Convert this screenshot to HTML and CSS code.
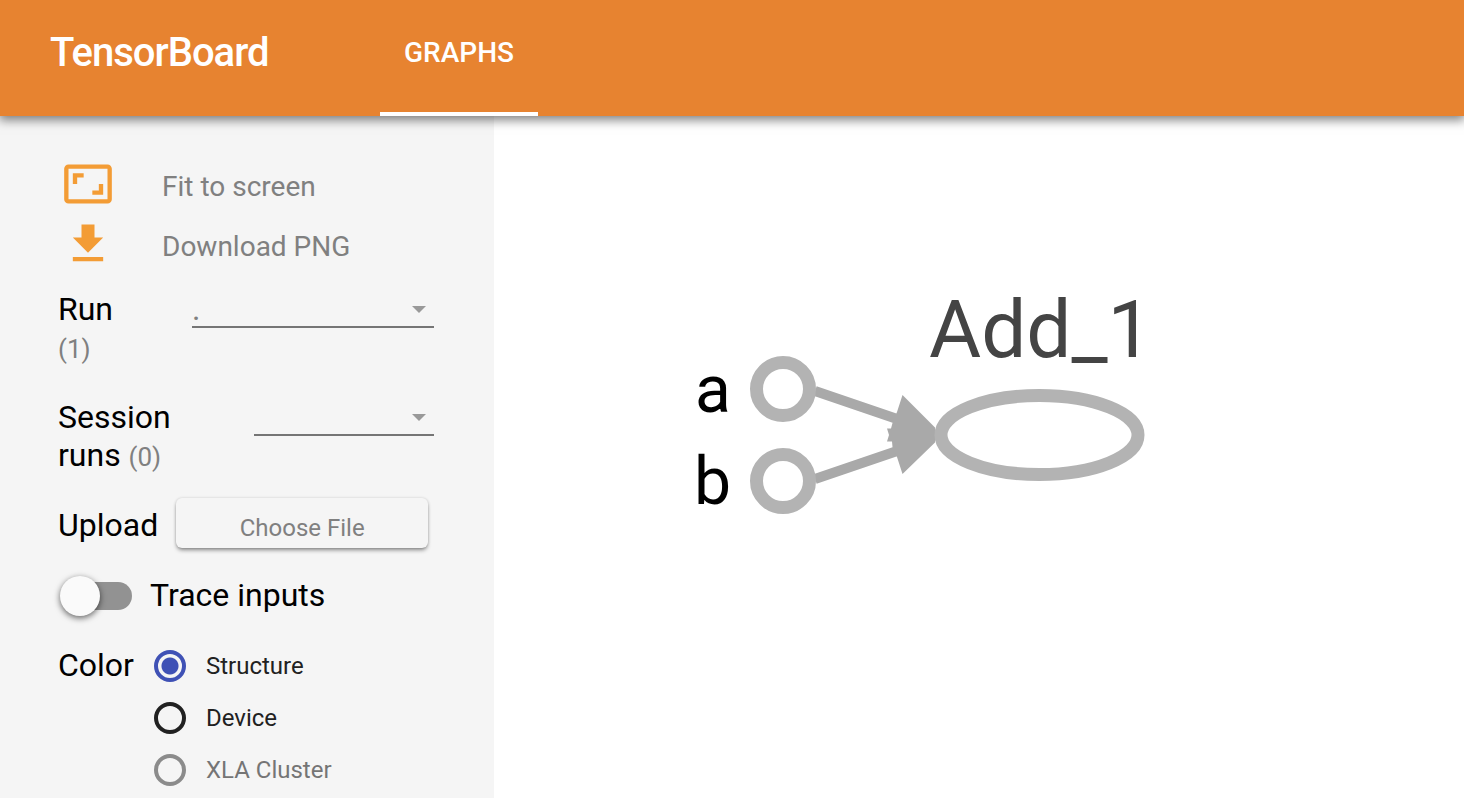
FILE: index.html
```html
<!DOCTYPE html>
<html lang="en">
<head>
<meta charset="utf-8">
<meta name="viewport" content="width=device-width, initial-scale=1">
<title>TensorBoard</title>
<link rel="stylesheet" href="styles.css">
</head>
<body>
<header class="toolbar">
  <h1 class="brand">TensorBoard</h1>
  <nav class="tabs"><button class="tab" type="button">GRAPHS</button></nav>
</header>
<div class="layout">
  <aside class="sidebar">
    <button class="action" type="button">
      <svg class="action-icon" viewBox="0 0 24 24" aria-hidden="true"><path d="M19 12h-2v3h-3v2h5v-5zM7 9h3V7H5v5h2V9zm14-6H3c-1.100 0-2 .9-2 2v14c0 1.100.9 2 2 2h18c1.100 0 2-.9 2-2V5c0-1.100-.9-2-2-2zm0 16.010H3V4.990h18v14.020z"/></svg>
      <span class="action-label">Fit to screen</span>
    </button>
    <button class="action" type="button">
      <svg class="action-icon" viewBox="0 0 24 24" aria-hidden="true"><path d="M19 9h-4V3H9v6H5l7 7 7-7zM5 18v2h14v-2H5z"/></svg>
      <span class="action-label">Download PNG</span>
    </button>
    <div class="field">
      <label class="field-label" for="run">Run<br><span class="count">(1)</span></label>
      <div class="picker picker-wide">
        <select id="run"><option>.</option></select>
        <svg class="arrow" viewBox="0 0 14 7" aria-hidden="true"><path d="M0 0h14L7 7z"/></svg>
      </div>
    </div>
    <div class="field">
      <label class="field-label" for="session">Session<br>runs <span class="count">(0)</span></label>
      <div class="picker picker-narrow">
        <select id="session"><option></option></select>
        <svg class="arrow" viewBox="0 0 14 7" aria-hidden="true"><path d="M0 0h14L7 7z"/></svg>
      </div>
    </div>
    <div class="upload">
      <span class="field-label">Upload</span>
      <button class="file-button" type="button">Choose File</button>
    </div>
    <div class="trace">
      <input class="toggle" type="checkbox" id="trace">
      <label class="field-label" for="trace">Trace inputs</label>
    </div>
    <div class="color" role="radiogroup" aria-labelledby="color-title">
      <span class="field-label" id="color-title">Color</span>
      <div class="options">
        <label class="option"><input type="radio" name="color" checked>Structure</label>
        <label class="option"><input type="radio" name="color">Device</label>
        <label class="option option-off"><input type="radio" name="color" disabled>XLA Cluster</label>
      </div>
    </div>
  </aside>
  <main class="canvas">
    <svg class="graph" viewBox="494 116 970 682" role="img" aria-label="Graph: a and b feed Add_1">
      <g class="edges">
        <path class="edge" d="M815 391L900 420M815 479L900 450"/>
        <path class="head" d="M902.500 395L935 427.500V442.500L902.500 474L897 457L892.500 447L892 441.500L887 441.500L889 435L887 428.500L891 428.500L892.500 423L897 412Z"/>
      </g>
      <g class="nodes">
        <circle cx="783" cy="389" r="26.500"/>
        <circle cx="783" cy="481" r="26.500"/>
        <ellipse cx="1039.500" cy="435" rx="98.500" ry="39.500"/>
      </g>
      <text class="input-name" x="695" y="412">a</text>
      <text class="input-name" x="694" y="504">b</text>
      <text class="op-name" x="929" y="357">Add_1</text>
    </svg>
  </main>
</div>
</body>
</html>
```
FILE: styles.css
```css
* { box-sizing: border-box; }

body {
  margin: 0;
  min-height: 100vh;
  display: flex;
  flex-direction: column;
  background: #fff;
  color: #000;
  font-family: Roboto, sans-serif;
}

button, select, input { font-family: inherit; margin: 0; }

button {
  border: 0;
  padding: 0;
  background: none;
  cursor: pointer;
}

.toolbar {
  position: relative;
  z-index: 1;
  display: flex;
  height: 116px;
  padding-left: 50px;
  background: #e78330;
  color: #fff;
  box-shadow: 0 3px 10px 1px rgba(0, 0, 0, 0.5);
}

.brand {
  width: 330px;
  margin: 0;
  font-size: 40px;
  font-weight: 500;
  letter-spacing: -1px;
  line-height: 106px;
}

.tabs { display: flex; }

.tab {
  padding: 0 24px 8px;
  border-bottom: 4px solid #fff;
  color: #fff;
  font-size: 28px;
  font-weight: 500;
}

.layout { display: flex; flex: 1; }

.sidebar {
  flex: 0 0 494px;
  padding: 38px 60px 0 58px;
  background: #f5f5f5;
}

.action {
  display: flex;
  align-items: center;
  width: 100%;
  height: 60px;
  padding-left: 4px;
  gap: 48px;
}

.action-icon { width: 52px; height: 52px; fill: #f39c35; }

.action-label {
  padding-top: 4px;
  color: #808080;
  font-size: 28px;
}

.field-label { font-size: 32px; line-height: 38px; }

.count { color: #808080; font-size: 26px; line-height: 1; }

.field {
  display: flex;
  justify-content: space-between;
  margin-top: 16px;
  margin-bottom: 32px;
}

.field + .field { margin-top: 0; margin-bottom: 24px; }

.picker { position: relative; height: 38px; }
.picker-wide { width: 242px; }
.picker-narrow { width: 180px; }

.picker select {
  appearance: none;
  width: 100%;
  height: 38px;
  padding: 0 0 2px;
  border: 0;
  border-bottom: 2px solid #757575;
  border-radius: 0;
  background: none;
  color: #808080;
  font-size: 32px;
}

.arrow {
  position: absolute;
  top: 16px;
  right: 8px;
  width: 14px;
  height: 7px;
  fill: #999;
  pointer-events: none;
}

.upload {
  display: flex;
  align-items: center;
  gap: 18px;
  height: 50px;
}

.upload .field-label { padding-top: 4px; }

.file-button {
  width: 252px;
  height: 50px;
  padding-top: 10px;
  border-radius: 6px;
  box-shadow: 0 3px 4px -1px rgba(0, 0, 0, 0.45), 0 0 3px rgba(0, 0, 0, 0.16);
  color: #808080;
  font-size: 24px;
}

.trace {
  display: flex;
  align-items: center;
  gap: 18px;
  height: 40px;
  margin-top: 28px;
}

.trace .field-label { padding-bottom: 2px; }

.toggle {
  appearance: none;
  position: relative;
  width: 64px;
  height: 28px;
  margin-left: 10px;
  border-radius: 14px;
  background: #929292;
}

.toggle::before {
  content: "";
  position: absolute;
  top: -6px;
  left: -8px;
  width: 40px;
  height: 40px;
  border-radius: 50%;
  background: #fafafa;
  box-shadow: 0 2px 6px rgba(0, 0, 0, 0.6);
}

.toggle:checked::before { left: 32px; }

.color {
  display: flex;
  gap: 20px;
  margin-top: 30px;
}

.options {
  display: flex;
  flex-direction: column;
  gap: 12px;
}

.option {
  display: flex;
  align-items: center;
  gap: 20px;
  height: 40px;
  color: #212121;
  font-size: 24px;
}

.option-off { color: #757575; }

.option input {
  appearance: none;
  width: 32px;
  height: 32px;
  border: 4px solid #212121;
  border-radius: 50%;
}

.option input:checked {
  border-color: #3f51b5;
  background: radial-gradient(circle, #3f51b5 8px, transparent 9px);
}

.option input:disabled { border-color: #8b8b8b; }

.canvas { flex: 1; min-width: 0; }

.graph { display: block; width: 100%; }

.edge { fill: none; stroke: #a9a9a9; stroke-width: 10; }
.head { fill: #a9a9a9; }
.nodes { fill: #fff; stroke: #b3b3b3; stroke-width: 13; }
.input-name { font-size: 66px; }
.op-name { font-size: 80px; fill: #444; }
```
